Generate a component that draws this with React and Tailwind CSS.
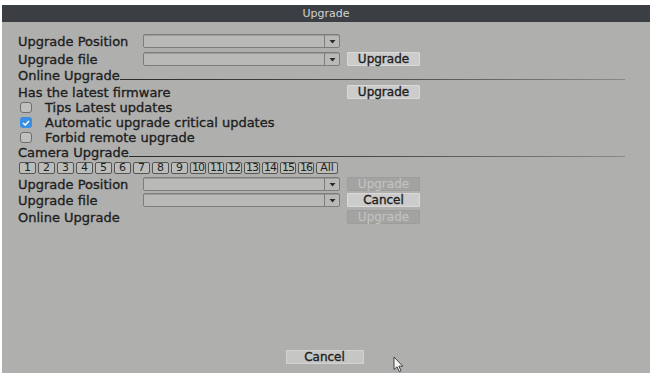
import React from "react";

const font = { fontFamily: '"DejaVu Sans", "Liberation Sans", sans-serif' };
const bold = "[-webkit-text-stroke:0.35px_#1e1e1e]";

function Dropdown() {
  return (
    <div className="w-[197px] h-[14px] flex border border-[#7d7e7c] rounded-[2px] bg-[#b9bab8] shadow-[inset_0_1px_0_#9c9d9b]">
      <div className="flex-1" />
      <div className="w-[15px] border-l border-[#7d7e7c] flex items-center justify-center">
        <svg width="7" height="5" viewBox="0 0 7 5">
          <path d="M0.5 1 L6.5 1 L3.5 4.5 Z" fill="#2a2a2a" />
        </svg>
      </div>
    </div>
  );
}

function Btn({ children, disabled }) {
  return (
    <div
      className={
        "w-[73px] h-[14px] flex items-center justify-center rounded-[1px] text-[12px] leading-none " +
        (disabled
          ? "bg-[#a3a4a2] text-[#c3c4c2] border border-[#9d9e9c]"
          : "bg-[#cbcccb] text-[#1e1e1e] border border-[#dadbd9] " + bold)
      }
    >
      {children}
    </div>
  );
}

function Row({ label, dropdown, btn, className = "" }) {
  return (
    <div className={"h-[16px] flex items-center " + className}>
      <div className={"w-[125px] text-[13px] leading-none text-[#1e1e1e] whitespace-nowrap " + bold}>{label}</div>
      {dropdown ? <Dropdown /> : <div className="w-[197px]" />}
      {btn && <div className="ml-[7px]">{btn}</div>}
    </div>
  );
}

function Section({ label, className = "" }) {
  return (
    <div className={"h-[14px] flex items-end " + className}>
      <span className={"text-[13px] leading-none text-[#1e1e1e] whitespace-nowrap " + bold}>{label}</span>
      <div className="flex-1 h-[1px] mb-[2px] bg-gradient-to-r from-[#2c2c2c] via-[#4a4a4a] to-[#8a8a8a]" />
    </div>
  );
}

function Check({ checked, label }) {
  return (
    <div className="h-[15px] flex items-center">
      <div className="w-[2px]" />
      {checked ? (
        <div className="w-[12px] h-[11px] rounded-[3px] bg-[#3a8fe3] flex items-center justify-center">
          <svg width="8" height="6" viewBox="0 0 8 6">
            <path d="M1 3 L3.2 5 L7 1" stroke="white" strokeWidth="1.5" fill="none" />
          </svg>
        </div>
      ) : (
        <div className="w-[12px] h-[11px] rounded-[3px] border border-[#6e6f6d] bg-[#c0c1bf]" />
      )}
      <span className={"ml-[13px] text-[13px] leading-none text-[#1e1e1e] whitespace-nowrap " + bold}>{label}</span>
    </div>
  );
}

export default function App() {
  const nums1 = ["1", "2", "3", "4", "5", "6", "7", "8", "9"];
  const nums2 = ["10", "11", "12", "13", "14", "15", "16"];
  return (
    <div className="w-[661px] h-[378px] bg-white relative overflow-hidden" style={font}>
      <div className="absolute left-[2px] top-[5px] w-[648px] h-[368px] flex flex-col">
        <div className="h-[17px] bg-[#3b3f43] flex items-center justify-center text-[11px] text-[#d2d3d1] leading-none">
          Upgrade
        </div>
        <div className="flex-1 bg-[#afb0ae] flex flex-col pl-[16px] pr-[25px] pt-[11px]">
          <Row label="Upgrade Position" dropdown />
          <Row label="Upgrade file" dropdown btn={<Btn>Upgrade</Btn>} className="mt-[2px]" />
          <Section label="Online Upgrade" className="mt-[1px]" />
          <Row label="Has the latest firmware" btn={<Btn>Upgrade</Btn>} className="mt-[2px]" />
          <Check label="Tips Latest updates" />
          <Check checked label="Automatic upgrade critical updates" />
          <Check label="Forbid remote upgrade" />
          <Section label="Camera Upgrade" />
          <div className="mt-[2px] h-[13px] flex items-center gap-[2px] pl-[1px]">
            {nums1.map((n) => (
              <div key={n} className="w-[17px] h-[12px] border border-[#555654] rounded-[2px] bg-[#bcbdbb] flex items-center justify-center text-[11px] leading-none text-[#1e1e1e]">
                {n}
              </div>
            ))}
            {nums2.map((n) => (
              <div key={n} className="w-[16px] h-[12px] border border-[#555654] rounded-[2px] bg-[#bcbdbb] flex items-center justify-center text-[11px] leading-none text-[#1e1e1e] tracking-[-1px]">
                {n}
              </div>
            ))}
            <div className="w-[22px] h-[12px] border border-[#555654] rounded-[2px] bg-[#bcbdbb] flex items-center justify-center text-[11px] leading-none text-[#1e1e1e]">
              All
            </div>
          </div>
          <Row label="Upgrade Position" dropdown btn={<Btn disabled>Upgrade</Btn>} className="mt-[2px]" />
          <Row label="Upgrade file" dropdown btn={<Btn>Cancel</Btn>} />
          <Row label="Online Upgrade" btn={<Btn disabled>Upgrade</Btn>} className="mt-[1px]" />
          <div className="flex-1" />
          <div className="flex justify-center pl-[6px] mb-[9px]">
            <div className={"w-[78px] h-[14px] flex items-center justify-center bg-[#c6c7c5] border border-[#d3d4d2] text-[12px] leading-none text-[#1e1e1e] " + bold}>
              Cancel
            </div>
          </div>
        </div>
      </div>
      <svg className="absolute left-[393px] top-[356px]" width="11" height="17" viewBox="0 0 11 17">
        <path d="M1 1 L1 13.5 L4 10.8 L6.2 15.5 L8 14.7 L5.9 10.2 L9.8 10.2 Z" fill="#f4f4f4" stroke="#333" strokeWidth="0.9" strokeLinejoin="round" />
      </svg>
    </div>
  );
}
